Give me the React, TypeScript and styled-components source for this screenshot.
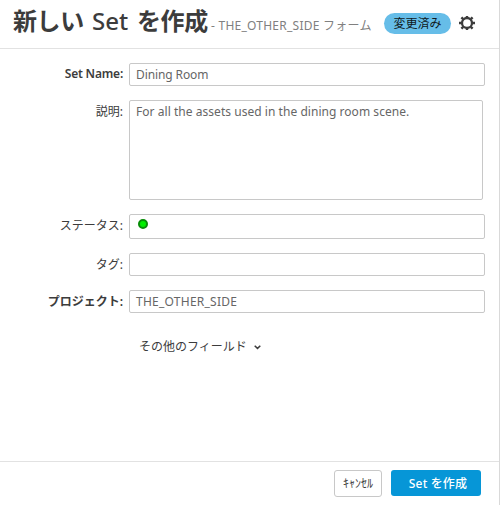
import React from "react";
import styled, { createGlobalStyle } from "styled-components";

const GlobalStyle = createGlobalStyle`
  * { box-sizing: border-box; }
  body { margin: 0; background: #fff; }
`;

const Dialog = styled.main`
  display: flex;
  flex-direction: column;
  width: 500px;
  height: 505px;
  overflow: hidden;
  background: #fff;
  border-right: 1px solid #d9d9d9;
  color: #3c3c3c;
  font: 12px/16px "Noto Sans", "Noto Sans CJK JP", sans-serif;
  white-space: nowrap;
`;

const Header = styled.header`
  display: flex;
  flex: none;
  height: 49px;
  padding-left: 13px;
  border-bottom: 1px solid #e2e2e2;
`;

const Title = styled.h1`
  display: flex;
  width: 195px;
  margin: 3px 0 0;
  font-size: 24px;
  line-height: 36px;
  font-weight: 700;
`;

const TitlePart = styled.span<{ $width: number; $latin?: boolean }>`
  flex: none;
  width: ${(p) => p.$width}px;
  font-size: 24px;
  font-weight: ${(p) => (p.$latin ? 500 : 700)};
  letter-spacing: ${(p) => (p.$latin ? 0 : -0.4)}px;
`;

const Subtitle = styled.span`
  width: 168px;
  margin: 18px 0 0 3px;
  color: #808080;
  letter-spacing: 0.25px;
`;

const Badge = styled.span`
  width: 67px;
  height: 21px;
  margin: 13px 0 0 5px;
  border-radius: 11px;
  background: #66bde8;
  color: #101820;
  line-height: 22px;
  text-align: center;
`;

const SettingsButton = styled.button`
  width: 16px;
  height: 16px;
  margin: 15px 0 0 8px;
  padding: 0;
  border: 0;
  background: none;
  svg { display: block; }
`;

const Form = styled.form`
  display: flex;
  flex: 1;
  flex-direction: column;
  gap: 14px;
  padding-top: 14px;
`;

const Row = styled.div`
  display: grid;
  grid-template-columns: 123px 356px;
  column-gap: 6px;
`;

const Label = styled.label<{ $bold?: boolean; $latin?: boolean }>`
  padding-top: ${(p) => (p.$latin ? 3 : 4)}px;
  text-align: right;
  font-weight: ${(p) => (p.$bold ? 600 : 400)};
  letter-spacing: ${(p) => (p.$latin ? -0.2 : 0)}px;
`;

const Field = styled.div<{ $height?: number; $width?: number; $spacing?: number }>`
  width: ${(p) => p.$width ?? 356}px;
  height: ${(p) => p.$height ?? 23}px;
  padding: 3px 6px;
  border: 1px solid #c8c8c8;
  border-radius: 2px;
  color: #666;
  letter-spacing: ${(p) => p.$spacing ?? 0}px;
`;

const StatusDot = styled.span`
  display: block;
  width: 10px;
  height: 10px;
  margin: 1px 0 0 2px;
  border: 2px solid #078d07;
  border-radius: 50%;
  background: #00ef00;
`;

const MoreFields = styled.button`
  display: flex;
  align-items: center;
  gap: 7px;
  align-self: flex-start;
  margin: 12px 0 0 139px;
  padding: 0;
  border: 0;
  background: none;
  color: #3c3c3c;
  font: inherit;
`;

const Footer = styled.footer`
  display: flex;
  flex: none;
  justify-content: flex-end;
  align-items: flex-start;
  gap: 9px;
  height: 44px;
  padding: 8px 18px 0 0;
  border-top: 1px solid #e2e2e2;
`;

const Button = styled.button<{ $primary?: boolean }>`
  width: ${(p) => (p.$primary ? 90 : 48)}px;
  height: ${(p) => (p.$primary ? 26 : 27)}px;
  padding: ${(p) => (p.$primary ? "2px 0 0 4px" : "0")};
  border: ${(p) => (p.$primary ? "0" : "1px solid #c8c8c8")};
  border-radius: 3px;
  background: ${(p) => (p.$primary ? "#0696d7" : "#fff")};
  color: ${(p) => (p.$primary ? "#fff" : "#3c3c3c")};
  font: ${(p) => (p.$primary ? "500" : "400")} 12px/24px "Noto Sans", "Noto Sans CJK JP", sans-serif;
  letter-spacing: ${(p) => (p.$primary ? 0.15 : 0)}px;
  white-space: nowrap;
`;

const GearIcon = () => (
  <svg width="16" height="16" viewBox="0 0 16 16" fill="none" stroke="#3c3c3c">
    <circle cx="8" cy="8" r="5" strokeWidth="2.3" />
    <path
      d="M8 1V3M8 13v2M0 8h3M13 8h3M2.4 2.4l1.8 1.8M11.8 11.8l1.8 1.8M13.6 2.4l-1.8 1.8M4.2 11.8l-1.8 1.8"
      strokeWidth="2.4"
    />
  </svg>
);

const ChevronIcon = () => (
  <svg width="7" height="5" viewBox="0 0 7 5" fill="none">
    <path d="M.7 .8l2.8 2.6L6.3 .8" stroke="#3c3c3c" strokeWidth="1.5" />
  </svg>
);

export default function App() {
  return (
    <>
      <GlobalStyle />
      <Dialog>
        <Header>
          <Title>
            <TitlePart $width={79}>新しい</TitlePart>
            <TitlePart $width={45} $latin>Set</TitlePart>
            <TitlePart $width={71}>を作成</TitlePart>
          </Title>
          <Subtitle>- THE_OTHER_SIDE フォーム</Subtitle>
          <Badge>変更済み</Badge>
          <SettingsButton type="button" aria-label="設定">
            <GearIcon />
          </SettingsButton>
        </Header>
        <Form>
          <Row>
            <Label $bold $latin>Set Name:</Label>
            <Field $spacing={-0.1}>Dining Room</Field>
          </Row>
          <Row>
            <Label>説明:</Label>
            <Field $height={100} $width={354} $spacing={0.04}>
              For all the assets used in the dining room scene.
            </Field>
          </Row>
          <Row>
            <Label>ステータス:</Label>
            <Field $height={25}>
              <StatusDot />
            </Field>
          </Row>
          <Row>
            <Label>タグ:</Label>
            <Field />
          </Row>
          <Row>
            <Label $bold>プロジェクト:</Label>
            <Field $spacing={0.25}>THE_OTHER_SIDE</Field>
          </Row>
          <MoreFields type="button">
            その他のフィールド
            <ChevronIcon />
          </MoreFields>
        </Form>
        <Footer>
          <Button type="button">ｷｬﾝｾﾙ</Button>
          <Button type="button" $primary>Set を作成</Button>
        </Footer>
      </Dialog>
    </>
  );
}
